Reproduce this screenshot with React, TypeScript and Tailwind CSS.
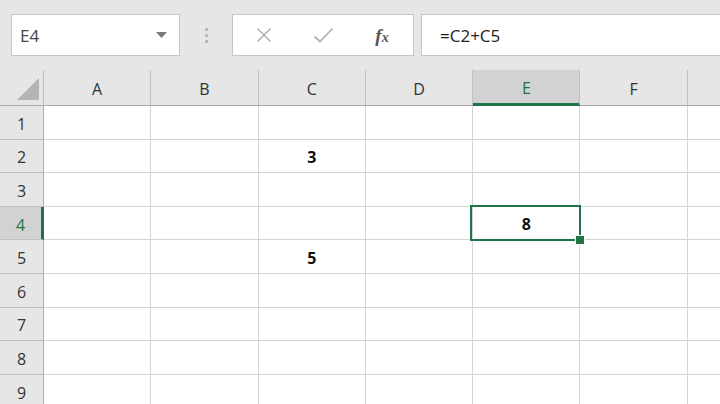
import React from "react";

const cols = ["A", "B", "C", "D", "E", "F", "G"];
const rows = [1, 2, 3, 4, 5, 6, 7, 8, 9, 10];
const data: Record<string, string> = { C2: "3", C5: "5", E4: "8" };

export default function App() {
  return (
    <div
      className="w-[720px] h-[404px] overflow-hidden bg-white relative"
      style={{ fontFamily: '"Open Sans", "Noto Sans", sans-serif' }}
    >
      {/* toolbar */}
      <div className="h-[70px] bg-[#e6e6e6] flex items-start pt-[14px] pl-[11px]">
        <div className="w-[169px] h-[42px] bg-white border border-[#c6c6c6] flex items-center justify-between pl-[8px] pr-[12px]">
          <span className="text-[17px] text-[#444] pt-[1px]">E4</span>
          <svg width="11" height="6" viewBox="0 0 11 6">
            <path d="M0 0 L11 0 L5.5 6 Z" fill="#7a7a7a" />
          </svg>
        </div>
        <div className="w-[52px] h-[42px] flex flex-col items-center justify-center gap-[3px]">
          <div className="w-[3px] h-[3px] bg-[#b8b8b8]" />
          <div className="w-[3px] h-[3px] bg-[#b8b8b8]" />
          <div className="w-[3px] h-[3px] bg-[#b8b8b8]" />
        </div>
        <div className="w-[182px] h-[42px] bg-white border border-[#c6c6c6] flex items-center">
          <div className="w-[62px] flex justify-center">
            <svg width="16" height="16" viewBox="0 0 16 16">
              <path d="M1.5 1.5 L14.5 14.5 M14.5 1.5 L1.5 14.5" stroke="#b3b3b3" strokeWidth="1.6" />
            </svg>
          </div>
          <div className="w-[56px] flex justify-center">
            <svg width="22" height="16" viewBox="0 0 22 16">
              <path d="M2.5 9.5 L8 14.5 L20.5 1.5" stroke="#b3b3b3" strokeWidth="1.8" fill="none" />
            </svg>
          </div>
          <div className="w-[62px] flex justify-center">
            <span
              className="text-[19px] italic text-[#555] font-semibold leading-none"
              style={{ fontFamily: '"Liberation Serif", serif' }}
            >
              f<span className="text-[14px]">x</span>
            </span>
          </div>
        </div>
        <div className="ml-[7px] flex-1 h-[42px] bg-white border border-[#c6c6c6] border-r-0 flex items-center pl-[18px]">
          <span className="text-[17px] text-[#222] pt-[1px]">=C2+C5</span>
        </div>
      </div>

      {/* column header */}
      <div className="h-[36px] flex bg-[#e6e6e6] border-b border-[#ababab]">
        <div className="w-[44px] shrink-0 border-r border-[#c0c0c0] flex items-end justify-end pr-[4px] pb-[5px]">
          <svg width="22" height="22" viewBox="0 0 22 22">
            <path d="M22 0 L22 22 L0 22 Z" fill="#b4b4b4" />
          </svg>
        </div>
        {cols.map((c) => (
          <div
            key={c}
            className={
              c === "E"
                ? "w-[107.3px] shrink-0 border-r border-[#c0c0c0] bg-[#d2d2d2] border-b-[3px] border-b-[#217346] -mb-[1px] flex items-center justify-center pt-[3px] text-[16px] text-[#217346]"
                : "w-[107.3px] shrink-0 border-r border-[#c0c0c0] flex items-center justify-center pt-[3px] text-[16px] text-[#333]"
            }
          >
            {c === "G" ? "" : c}
          </div>
        ))}
      </div>

      {/* rows */}
      {rows.map((r) => (
        <div key={r} className="h-[33.6px] flex">
          <div
            className={
              r === 4
                ? "w-[44px] shrink-0 bg-[#d2d2d2] border-b border-[#c0c0c0] border-r-[3px] border-r-[#217346] flex items-center justify-center pt-[3px] text-[16px] text-[#217346]"
                : "w-[44px] shrink-0 bg-[#e6e6e6] border-b border-[#c0c0c0] border-r border-r-[#ababab] flex items-center justify-center pt-[3px] text-[16px] text-[#333]"
            }
          >
            {r === 10 ? "" : r}
          </div>
          {cols.map((c) => {
            const key = `${c}${r}`;
            const v = data[key];
            return (
              <div
                key={key}
                className={
                  key === "E4"
                    ? "w-[107.3px] shrink-0 border-r border-b border-[#d4d4d4] relative z-10 flex items-center justify-center pt-[2px] text-[16px] font-bold text-[#111]"
                    : "w-[107.3px] shrink-0 border-r border-b border-[#d4d4d4] relative flex items-center justify-center pt-[2px] text-[16px] font-bold text-[#111]"
                }
              >
                {v}
                {key === "E4" && (
                  <div className="absolute -left-[3px] -top-[2px] -right-[2px] -bottom-[2px] border-2 border-[#217346]">
                    <div className="absolute -right-[6px] -bottom-[6px] w-[10px] h-[10px] bg-[#217346] border-[1.5px] border-white" />
                  </div>
                )}
              </div>
            );
          })}
        </div>
      ))}
    </div>
  );
}
